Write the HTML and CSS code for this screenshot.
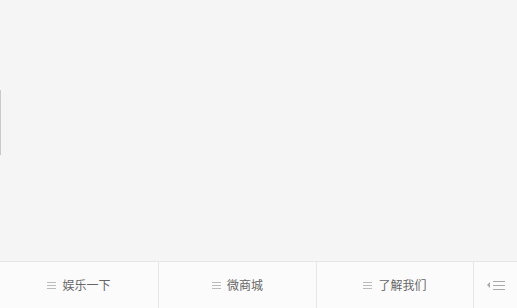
FILE: index.html
```html
<!DOCTYPE html>
<html>
<head>
<meta charset="utf-8">
<link rel="stylesheet" href="styles.css">
</head>
<body>
<div class="page">
  <main class="content">
    <div class="edge-bar"></div>
  </main>
  <nav class="tabbar">
    <div class="tab tab-1"><span class="menu-icon"><i></i><i></i><i></i></span><span class="label">娱乐一下</span></div>
    <div class="tab tab-2"><span class="menu-icon"><i></i><i></i><i></i></span><span class="label">微商城</span></div>
    <div class="tab tab-3"><span class="menu-icon"><i></i><i></i><i></i></span><span class="label">了解我们</span></div>
    <div class="tab tab-more"><span class="arrow"></span><span class="menu-icon big"><i></i><i></i><i></i></span></div>
  </nav>
</div>
</body>
</html>
```

FILE: styles.css
```css
html, body {
  margin: 0;
  padding: 0;
}
body {
  font-family: "Noto Sans CJK SC", "Noto Sans", sans-serif;
  background: #f5f5f5;
}
.page {
  width: 517px;
  height: 308px;
  display: flex;
  flex-direction: column;
  overflow: hidden;
}
.content {
  flex: 1;
  background: #f5f5f5;
  display: flex;
  flex-direction: column;
}
.edge-bar {
  width: 1px;
  height: 65px;
  margin-top: 90px;
  background: #c9c9c9;
}
.tabbar {
  height: 46px;
  border-top: 1px solid #e6e6e6;
  background: #fbfbfb;
  display: flex;
}
.tab {
  box-sizing: border-box;
  display: flex;
  align-items: center;
  justify-content: center;
  gap: 6px;
  border-right: 1px solid #e6e6e6;
}
.tab-1 { flex: 0 0 159px; }
.tab-2 { flex: 0 0 158px; }
.tab-3 { flex: 0 0 157px; }
.tab-more {
  flex: 1;
  border-right: none;
  gap: 3px;
}
.label {
  font-size: 12px;
  color: #666;
  line-height: 16px;
}
.menu-icon {
  display: flex;
  flex-direction: column;
  gap: 2px;
  width: 9px;
}
.menu-icon i {
  display: block;
  height: 1px;
  background: #bbb;
}
.menu-icon.big {
  width: 12px;
  gap: 3px;
}
.menu-icon.big i {
  background: #aaa;
}
.arrow {
  width: 0;
  height: 0;
  border-top: 3px solid transparent;
  border-bottom: 3px solid transparent;
  border-right: 3px solid #aaa;
}
```
